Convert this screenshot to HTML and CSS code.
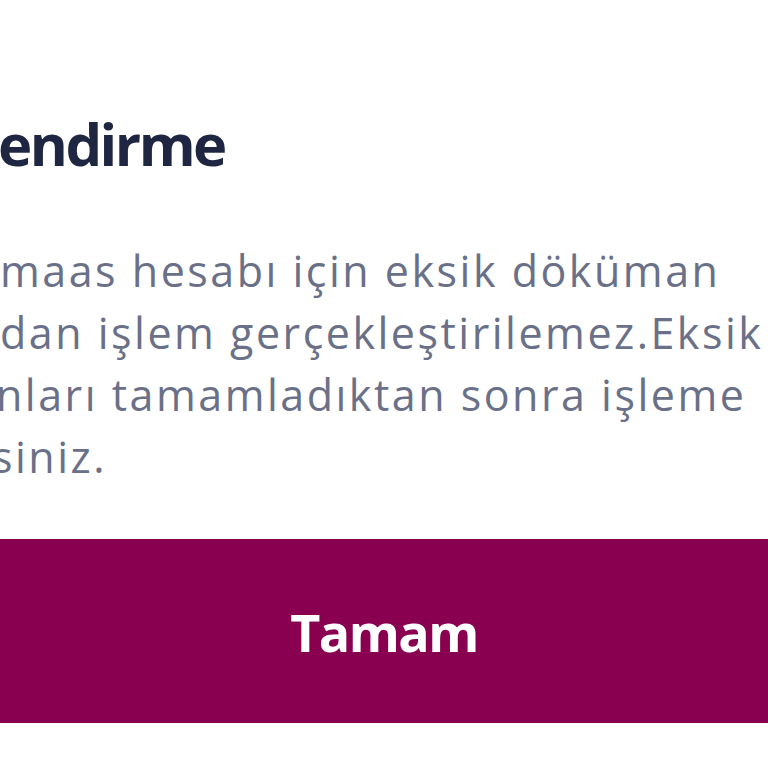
FILE: index.html
```html
<!DOCTYPE html>
<html lang="tr">
<head>
<meta charset="utf-8">
<link rel="stylesheet" href="styles.css">
</head>
<body>
<div class="modal">
  <div class="content">
    <h1 class="title">endirme</h1>
    <div class="message">
      <div class="line l1">maas hesabı için eksik döküman</div>
      <div class="line l2">dan işlem gerçekleştirilemez.Eksik</div>
      <div class="line l3">nları tamamladıktan sonra işleme</div>
      <div class="line l4">siniz.</div>
    </div>
  </div>
  <button class="btn">Tamam</button>
</div>
</body>
</html>
```
FILE: styles.css
```css
html, body {
  margin: 0;
  padding: 0;
  background: #ffffff;
  overflow: hidden;
}
body {
  width: 768px;
  height: 768px;
  font-family: "Open Sans", "Lato", sans-serif;
}
.modal {
  display: flex;
  flex-direction: column;
}
.content {
  padding-top: 110px;
  padding-bottom: 51px;
}
.title {
  margin: 0;
  font-size: 58px;
  line-height: 68px;
  font-weight: 700;
  letter-spacing: -2.5px;
  color: #1e2642;
  text-indent: -2px;
  white-space: nowrap;
}
.message {
  margin-top: 62px;
  color: #6a7088;
  font-size: 43px;
  line-height: 62px;
  letter-spacing: 2.5px;
}
.line {
  white-space: nowrap;
}
.l1 { text-indent: 0; }
.l2 { text-indent: 0; }
.l3 { text-indent: -4px; }
.l4 { text-indent: -8px; }
.btn {
  height: 184px;
  margin: 0;
  border: none;
  background: #8a0050;
  color: #ffffff;
  font-family: inherit;
  font-size: 52px;
  font-weight: 700;
  letter-spacing: -1.5px;
  width: 100%;
  padding: 0;
}
```
